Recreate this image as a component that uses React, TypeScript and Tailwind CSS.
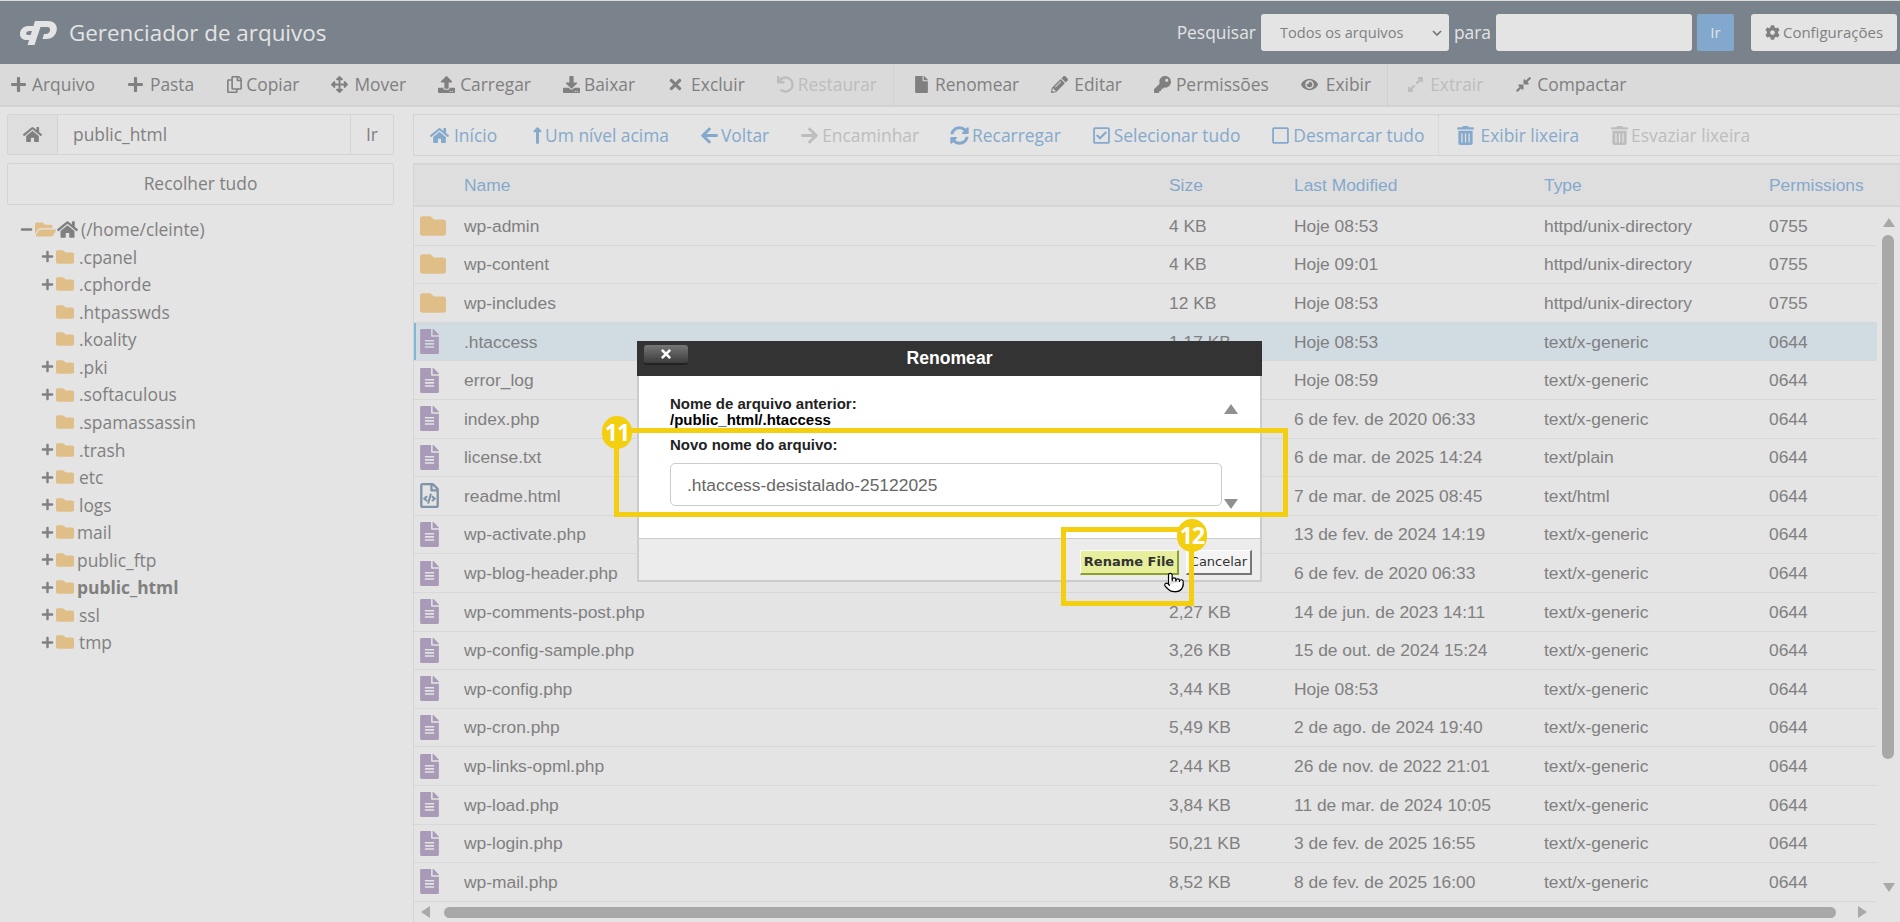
import React from "react";
import {
  FaPlus, FaRegCopy, FaArrowsAlt, FaUpload, FaDownload, FaTimes, FaUndo, FaFile, FaPencilAlt, FaKey, FaEye,
  FaExpandAlt, FaCompressAlt, FaHome, FaLongArrowAltUp, FaArrowLeft, FaArrowRight, FaSyncAlt, FaRegCheckSquare,
  FaRegSquare, FaTrashAlt, FaFolder, FaFolderOpen, FaFileAlt, FaRegFileCode, FaCog, FaMinus,
} from "react-icons/fa";
import { Pointer } from "lucide-react";

const toolbar = [
  { icon: FaPlus, label: "Arquivo", gap: "mr-[5px]" },
  { icon: FaPlus, label: "Pasta", gap: "mr-[6px]" },
  { icon: FaRegCopy, label: "Copiar", gap: "mr-[3px]" },
  { icon: FaArrowsAlt, label: "Mover", gap: "mr-[6px]" },
  { icon: FaUpload, label: "Carregar", gap: "mr-[5px]" },
  { icon: FaDownload, label: "Baixar", gap: "mr-[4px]" },
  { icon: FaTimes, label: "Excluir", gap: "mr-[7px]" },
  { icon: FaUndo, label: "Restaurar", off: true, sep: true, gap: "mr-[4px]" },
  { icon: FaFile, label: "Renomear", gap: "mr-[5px]" },
  { icon: FaPencilAlt, label: "Editar", gap: "mr-[6px]" },
  { icon: FaKey, label: "Permissões", gap: "mr-[5px]" },
  { icon: FaEye, label: "Exibir", sep: true, gap: "mr-[8px]" },
  { icon: FaExpandAlt, label: "Extrair", off: true, gap: "mr-[6px]" },
  { icon: FaCompressAlt, label: "Compactar", gap: "mr-[5px]" },
];

const nav = [
  { icon: FaHome, label: "Início", gap: "mr-[5px]" },
  { icon: FaLongArrowAltUp, label: "Um nível acima", gap: "mr-[-2px]" },
  { icon: FaArrowLeft, label: "Voltar", gap: "mr-[2px]" },
  { icon: FaArrowRight, label: "Encaminhar", off: true, gap: "mr-[3px]" },
  { icon: FaSyncAlt, label: "Recarregar", gap: "mr-[3px]" },
  { icon: FaRegCheckSquare, label: "Selecionar tudo", gap: "mr-[3px]" },
  { icon: FaRegSquare, label: "Desmarcar tudo", sep: true, gap: "mr-[3px]" },
  { icon: FaTrashAlt, label: "Exibir lixeira", gap: "mr-[5px]" },
  { icon: FaTrashAlt, label: "Esvaziar lixeira", off: true, gap: "mr-[2px]" },
];

const tree = [
  { name: ".cpanel", plus: true },
  { name: ".cphorde", plus: true },
  { name: ".htpasswds" },
  { name: ".koality" },
  { name: ".pki", plus: true },
  { name: ".softaculous", plus: true },
  { name: ".spamassassin" },
  { name: ".trash", plus: true },
  { name: "etc", plus: true },
  { name: "logs", plus: true },
  { name: "mail", plus: true, tight: true },
  { name: "public_ftp", plus: true, tight: true },
  { name: "public_html", plus: true, tight: true, bold: true },
  { name: "ssl", plus: true },
  { name: "tmp", plus: true },
];

const files = [
  ["wp-admin", "4 KB", "Hoje 08:53", "httpd/unix-directory", "0755", "dir"],
  ["wp-content", "4 KB", "Hoje 09:01", "httpd/unix-directory", "0755", "dir"],
  ["wp-includes", "12 KB", "Hoje 08:53", "httpd/unix-directory", "0755", "dir"],
  [".htaccess", "1,17 KB", "Hoje 08:53", "text/x-generic", "0644", "file"],
  ["error_log", "980 bytes", "Hoje 08:59", "text/x-generic", "0644", "file"],
  ["index.php", "405 bytes", "6 de fev. de 2020 06:33", "text/x-generic", "0644", "file"],
  ["license.txt", "19,9 KB", "6 de mar. de 2025 14:24", "text/plain", "0644", "file"],
  ["readme.html", "7,4 KB", "7 de mar. de 2025 08:45", "text/html", "0644", "html"],
  ["wp-activate.php", "7,21 KB", "13 de fev. de 2024 14:19", "text/x-generic", "0644", "file"],
  ["wp-blog-header.php", "351 bytes", "6 de fev. de 2020 06:33", "text/x-generic", "0644", "file"],
  ["wp-comments-post.php", "2,27 KB", "14 de jun. de 2023 14:11", "text/x-generic", "0644", "file"],
  ["wp-config-sample.php", "3,26 KB", "15 de out. de 2024 15:24", "text/x-generic", "0644", "file"],
  ["wp-config.php", "3,44 KB", "Hoje 08:53", "text/x-generic", "0644", "file"],
  ["wp-cron.php", "5,49 KB", "2 de ago. de 2024 19:40", "text/x-generic", "0644", "file"],
  ["wp-links-opml.php", "2,44 KB", "26 de nov. de 2022 21:01", "text/x-generic", "0644", "file"],
  ["wp-load.php", "3,84 KB", "11 de mar. de 2024 10:05", "text/x-generic", "0644", "file"],
  ["wp-login.php", "50,21 KB", "3 de fev. de 2025 16:55", "text/x-generic", "0644", "file"],
  ["wp-mail.php", "8,52 KB", "8 de fev. de 2025 16:00", "text/x-generic", "0644", "file"],
];

const columns = "grid grid-cols-[50px_705px_125px_250px_225px_1fr] items-center";

function Badge({ label }: { label: string }) {
  return (
    <div className="flex h-[33px] w-[30px] items-center justify-center rounded-full bg-[#f3cf10] font-['Open_Sans',sans-serif] text-[23px] font-bold tracking-[-1px] text-white">
      {label}
    </div>
  );
}

export default function App() {
  return (
    <div className="relative flex h-[922px] w-[1900px] flex-col overflow-hidden bg-[#e4e4e4] font-['Open_Sans',sans-serif] text-[17.4px] text-[#808080]">
      <header className="flex h-[64px] items-center border-t border-[#dcdcdc] bg-[#7a828c] pl-[20px] pr-[3px] text-[#e4e4e4]">
        <svg viewBox="0 0 37 25" className="h-[25px] w-[37px]" fill="#e4e4e4">
          <path d="M15 6H8C3 6 0 10 0 14c0 4 3 6 7 6h3l2-5H8c-3 0-2-4 1-4h4.500z" />
          <path d="M15 1h13c6 0 10 4 8.500 10-1 5-5 8-10 8h-4l1.500-5h2.500c4 0 5-7 1-7h-7l-6 18h-7z" />
        </svg>
        <div className="ml-[12px] text-[22.4px]">Gerenciador de arquivos</div>
        <div className="ml-auto flex items-center">
          <span className="mr-[5px]">Pesquisar</span>
          <div className="flex h-[37px] w-[188px] items-center justify-between rounded-[3px] bg-[#e4e4e4] pl-[19px] pr-[7px] text-[14.6px] text-[#808080]">
            Todos os arquivos
            <svg viewBox="0 0 10 6" className="h-[6px] w-[10px]" fill="none" stroke="#707070" strokeWidth="1.6"><path d="M1 1l4 4 4-4" /></svg>
          </div>
          <span className="mx-[5px]">para</span>
          <div className="h-[37px] w-[196px] rounded-[3px] bg-[#e4e4e4]" />
          <div className="ml-[5px] flex h-[37px] w-[37px] items-center justify-center rounded-[2px] bg-[#82a9cd] text-[15px]">Ir</div>
          <div className="ml-[17px] flex h-[37px] w-[146px] items-center justify-center gap-[3px] rounded-[3px] bg-[#e4e4e4] text-[15px] text-[#808080]">
            <FaCog className="text-[15px]" />Configurações
          </div>
        </div>
      </header>

      <div className="flex h-[43px] items-center border-b-2 border-[#d2d2d2] bg-[#dadada] pl-[10px]">
        {toolbar.map((t) => (
          <div key={t.label} className={`flex h-full items-center ${t.sep ? "mr-[19px] border-r border-dotted border-[#c8c8c8] pr-[16px]" : "mr-[32px]"} ${t.off ? "text-[#bdbdbd]" : ""}`}>
            <t.icon className={`${t.gap} text-[17px]`} />
            {t.label}
          </div>
        ))}
      </div>

      <div className="flex min-h-0 flex-1">
        <aside className="w-[413px] shrink-0 pl-[7px] pr-[19px] pt-[7px]">
          <div className="flex h-[41px] items-stretch rounded-[2px] border border-[#d4d4d4]">
            <div className="flex w-[50px] items-center justify-center border-r border-[#d4d4d4] bg-[#dedede] text-[19px]"><FaHome /></div>
            <div className="flex flex-1 items-center pl-[15px]">public_html</div>
            <div className="flex w-[43px] items-center justify-center border-l border-[#d4d4d4]">Ir</div>
          </div>
          <div className="mt-[8px] flex h-[42px] items-center justify-center rounded-[2px] border border-[#d4d4d4] pb-[2px]">Recolher tudo</div>
          <div className="ml-[13px] mt-[11px] flex h-[27px] items-center">
            <FaMinus className="w-[13px] text-[13px]" />
            <FaFolderOpen className="ml-[2px] text-[21px] text-[#dfbe87]" />
            <FaHome className="ml-[1px] text-[21px]" />
            <span className="ml-[3px]">(/home/cleinte)</span>
          </div>
          <div className="ml-[34px]">
            {tree.map((n) => (
              <div key={n.name} className="flex h-[27.55px] items-center">
                <span className="w-[14px]">{n.plus && <FaPlus className="text-[13px]" />}</span>
                <FaFolder className="ml-[1px] text-[18px] text-[#dfbe87]" />
                <span className={`${n.tight ? "ml-[3px]" : "ml-[5px]"} ${n.bold ? "font-bold" : ""}`}>{n.name}</span>
              </div>
            ))}
          </div>
        </aside>

        <main className="flex min-w-0 flex-1 flex-col pt-[7px]">
          <div className="flex h-[42px] items-center border border-r-0 border-[#d4d4d4] pl-[16px] text-[#85a9cc]">
            {nav.map((t) => (
              <div key={t.label} className={`flex h-full items-center ${t.sep ? "mr-[17px] border-r border-dotted border-[#cfcfcf] pr-[14px]" : "mr-[31px]"} ${t.off ? "text-[#bdbdbd]" : ""}`}>
                <t.icon className={`${t.gap} text-[19px]`} />
                {t.label}
              </div>
            ))}
          </div>
          <div className="mt-[7px] flex min-h-0 flex-1 flex-col border-l border-[#d4d4d4] font-['Liberation_Sans',sans-serif]">
            <div className={`${columns} h-[44px] shrink-0 border-y-2 border-[#d6d6d6] bg-[#dedede] text-[#85a9cc]`}>
              <span />
              <span>Name</span><span>Size</span><span>Last Modified</span><span>Type</span><span>Permissions</span>
            </div>
            <div className="flex min-h-0 flex-1">
              <div className="min-w-0 flex-1">
                {files.map((f) => (
                  <div key={f[0]} className={`${columns} h-[38.6px] border-b border-[#d8d8d8] ${f[0] === ".htaccess" ? "bg-[#d0dbe2] shadow-[inset_2px_0_0_#7fb5d8]" : ""}`}>
                    <span className="pl-[6px]">
                      {f[5] === "dir" && <FaFolder className="text-[26px] text-[#dfbe87]" />}
                      {f[5] === "file" && <FaFileAlt className="ml-[-3px] text-[25px] text-[#a99bb8]" />}
                      {f[5] === "html" && <FaRegFileCode className="ml-[-3px] text-[25px] text-[#7f94a8]" />}
                    </span>
                    <span>{f[0]}</span><span>{f[1]}</span><span>{f[2]}</span><span>{f[3]}</span><span>{f[4]}</span>
                  </div>
                ))}
              </div>
              <div className="flex w-[23px] shrink-0 flex-col items-center pt-[11px]">
                <div className="h-0 w-0 border-x-[6px] border-b-[9px] border-x-transparent border-b-[#a8a8a8]" />
                <div className="ml-[-1px] mt-[8px] h-[524px] w-[12px] rounded-full bg-[#a8a8a8]" />
                <div className="mt-[124px] h-0 w-0 border-x-[6px] border-t-[9px] border-x-transparent border-t-[#a8a8a8]" />
              </div>
            </div>
            <div className="flex h-[20px] shrink-0 items-center pl-[7px]">
              <div className="h-0 w-0 border-y-[6px] border-r-[9px] border-y-transparent border-r-[#a8a8a8]" />
              <div className="ml-[14px] h-[11px] w-[1392px] rounded-full bg-[#a8a8a8]" />
              <div className="ml-[22px] h-0 w-0 border-y-[6px] border-l-[9px] border-y-transparent border-l-[#a8a8a8]" />
            </div>
          </div>
        </main>
      </div>

      {/* modal */}
      <div className="absolute left-[637px] top-[341px] flex h-[241px] w-[625px] flex-col border-x-2 border-b-2 border-[#cccccc] bg-white font-['Liberation_Sans',sans-serif] text-[#222]">
        <div className="relative -mx-[2px] flex h-[35px] shrink-0 items-center justify-center bg-[#333333] text-[17.6px] font-bold text-white">
          Renomear
          <div className="absolute left-[7px] top-[4px] flex h-[20px] w-[44px] items-center justify-center rounded-[3px] border-b-2 border-[#222] bg-gradient-to-b from-[#777] to-[#3d3d3d] text-[14px]">
            <FaTimes />
          </div>
        </div>
        <div className="relative min-h-0 flex-1 pl-[31px] pt-[20px] text-[15px] font-bold leading-[16px]">
          <div>Nome de arquivo anterior:</div>
          <div className="text-black">/public_html/.htaccess</div>
          <div className="mt-[9px]">Novo nome do arquivo:</div>
          <div className="mt-[10px] flex h-[43px] w-[552px] items-center rounded-[5px] border border-[#cccccc] pl-[16px] text-[17.4px] font-normal text-[#666]">.htaccess-desistalado-25122025</div>
          <div className="absolute right-[22px] top-[28px] h-0 w-0 border-x-[7px] border-b-[10px] border-x-transparent border-b-[#909090]" />
          <div className="absolute right-[22px] top-[123px] h-0 w-0 border-x-[7px] border-t-[10px] border-x-transparent border-t-[#909090]" />
        </div>
        <div className="flex h-[42px] shrink-0 items-center justify-end gap-[7px] border-t border-[#cccccc] bg-[#ececec] pr-[8px] pt-[5px] font-['DejaVu_Sans',sans-serif] text-[13px]">
          <div className="flex h-[25px] w-[99px] items-center justify-center border-b-2 border-l border-r-2 border-t border-[#8f9f2b] border-l-white border-t-white bg-[#e7ee9c] font-bold text-[#333]">Rename File</div>
          <div className="flex h-[25px] w-[66px] items-center justify-center border-b-2 border-l border-r-2 border-t border-[#777] border-l-white border-t-white bg-[#f4f4f4] text-[#333]">Cancelar</div>
        </div>
      </div>

      {/* tutorial annotations */}
      <div className="absolute left-[614px] top-[428px] h-[89px] w-[674px] border-[5px] border-[#f3cf10]" />
      <div className="absolute left-[602px] top-[416px]"><Badge label="11" /></div>
      <div className="absolute left-[1061px] top-[527px] h-[79px] w-[133px] border-[5px] border-[#f3cf10]" />
      <div className="absolute left-[1177px] top-[519px]"><Badge label="12" /></div>
      <Pointer className="absolute left-[1163px] top-[570px] h-[25px] w-[22px] fill-white text-black" strokeWidth={1.3} />
    </div>
  );
}
